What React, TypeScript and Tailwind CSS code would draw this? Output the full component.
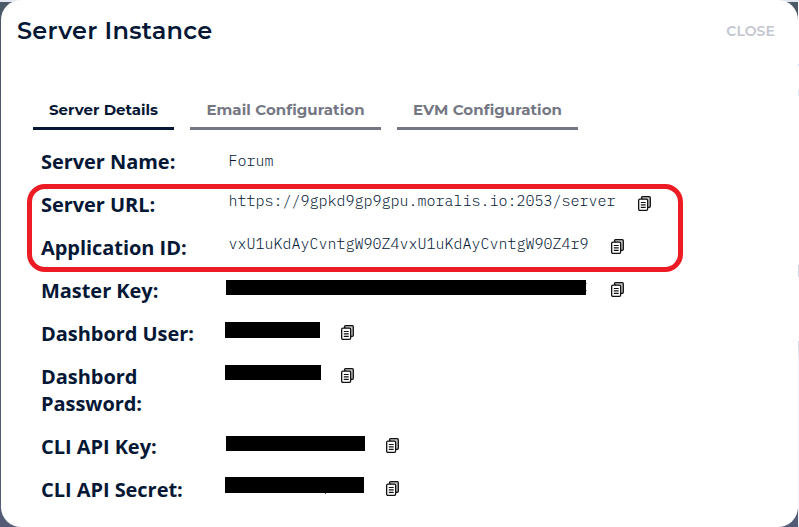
import React from "react";

function CopyIcon() {
  return (
    <svg className="mt-[13px] block h-[15px] w-[13px] shrink-0" viewBox="0 0 13 15" fill="none">
      <path d="M3.5 2V1.7Q3.5.7 4.5.7h6.8q1 0 1 1v8.6q0 1-1 1H10Z" fill="#c4c4c4" stroke="#111" strokeWidth="1.3" />
      <rect x=".65" y="3.2" width="9" height="11.1" rx="1.2" fill="#fff" stroke="#111" strokeWidth="1.3" />
      <path d="M2.8 6.5h4.9M2.8 8.9h4.9M2.8 11.3h4.9" stroke="#111" strokeWidth="1.2" />
    </svg>
  );
}

type RowProps = { label: string; children: React.ReactNode; copy?: boolean; gap?: string };

function Row({ label, children, copy = true, gap = "w-[22px]" }: RowProps) {
  return (
    <div className="flex items-start">
      <div className="w-[184px] shrink-0 py-2 pl-2 pr-5 font-['Open_Sans','Noto_Sans',sans-serif] text-[20px] font-bold leading-[27px] tracking-[-0.05px] text-[#041836]">
        {label}
      </div>
      {children}
      {copy && (
        <>
          <div className={gap + " shrink-0"} />
          <CopyIcon />
        </>
      )}
    </div>
  );
}

const mono =
  "ml-[11px] whitespace-pre pl-[0.5px] -mr-[0.5px] font-['IBM_Plex_Mono','Liberation_Mono',monospace] text-[15px] font-light leading-[20px] text-[#041836]";

const font = "font-['Montserrat','Inter',sans-serif]";

export default function App() {
  return (
    <div className="relative h-[527px] w-[799px] overflow-hidden bg-white">
      <div className="absolute inset-y-0 left-0 w-[798px] bg-gradient-to-b from-[#4c5967] to-[#535b76] to-50%" />
      <div className="absolute left-0 top-0 h-[2px] w-[799px] bg-[#e3e7f1]" />
      <div className="absolute left-[798px] top-[64px] h-[2px] w-px bg-[#c5e0f0]" />
      <div className="absolute left-[798px] top-[90px] h-[6px] w-px bg-[#dcecfa]" />
      <div className="absolute left-[798px] top-[265px] h-[12px] w-px bg-[#ccd6e5]" />
      <div className="absolute left-[798px] top-[341px] h-[186px] w-px bg-gradient-to-b from-[#cbd4e0] to-[#eff5fc] to-10%" />
      <main className="relative ml-px h-[527px] w-[797px] rounded-[20px] bg-white">
        <header className="flex items-start justify-between pl-4 pr-[23px] pt-[16px]">
          <h1 className={font + " whitespace-nowrap text-[24px] font-semibold leading-[30px] tracking-[0.27px] text-[#041836]"}>
            Server Instance
          </h1>
          <button className={font + " mt-[5px] text-[14px] font-semibold leading-5 tracking-[0.1px] text-[#c3c6cf]"}>
            CLOSE
          </button>
        </header>
        <nav className={font + " ml-8 mt-[54px] flex gap-4 text-[15px] font-bold leading-[20px]"}>
          <div className="flex h-[30px] w-[141px] justify-center whitespace-nowrap border-b-[3px] border-[#041836] text-[#041836]">
            Server Details
          </div>
          <div className="flex h-[30px] w-[191px] justify-center whitespace-nowrap border-b-[3px] border-[#747783] tracking-[0.08px] text-[#747783]">
            Email Configuration
          </div>
          <div className="flex h-[30px] w-[181px] justify-center whitespace-nowrap border-b-[3px] border-[#747783] tracking-[0.08px] text-[#747783]">
            EVM Configuration
          </div>
        </nav>
        <section className="ml-8 mt-[10px]">
          <Row label="Server Name:" copy={false}>
            <span className={mono + " mt-[11px]"}>Forum</span>
          </Row>
          <Row label="Server URL:" gap="w-[23px]">
            <span className={mono + " mt-[8px]"}>https://9gpkd9gp9gpu.moralis.io:2053/server</span>
          </Row>
          <Row label="Application ID:" gap="w-[23px]">
            <span className={mono + " mt-[8px]"}>vxU1uKdAyCvntgW90Z4vxU1uKdAyCvntgW90Z4r9</span>
          </Row>
          <Row label="Master Key:" gap="w-[24px]">
            <div className="ml-[9px] mt-[11px] h-[15px] w-[360px] bg-black" />
            <div className="mt-[14px] flex h-[8px] w-px flex-col justify-between">
              <i className="h-px bg-[#7895b5]" />
              <i className="h-px bg-[#8a8a95]" />
            </div>
          </Row>
          <Row label="Dashbord User:" gap="w-[21px]">
            <div className="ml-[8px] mt-[10px] h-[16px] w-[95px] bg-black" />
          </Row>
          <Row label="Dashbord Password:" gap="w-[20px]">
            <div className="ml-[8px] mt-[10px] h-[15px] w-[96px] bg-black" />
          </Row>
          <Row label="CLI API Key:" gap="w-[21px]">
            <div className="ml-[9px] mt-[11px] h-[15px] w-[139px] bg-black" />
          </Row>
          <Row label="CLI API Secret:">
            <div className="ml-[8px] mt-[9px] flex h-[16px] w-[139px] items-end bg-black">
              <i className="-mb-px ml-[100px] h-px w-px bg-[#555]" />
            </div>
          </Row>
        </section>
      </main>
      <div className="absolute left-[27px] top-[184px] h-[88px] w-[656px] rounded-[18px] border-[5px] border-[#ed1c24]" />
    </div>
  );
}
